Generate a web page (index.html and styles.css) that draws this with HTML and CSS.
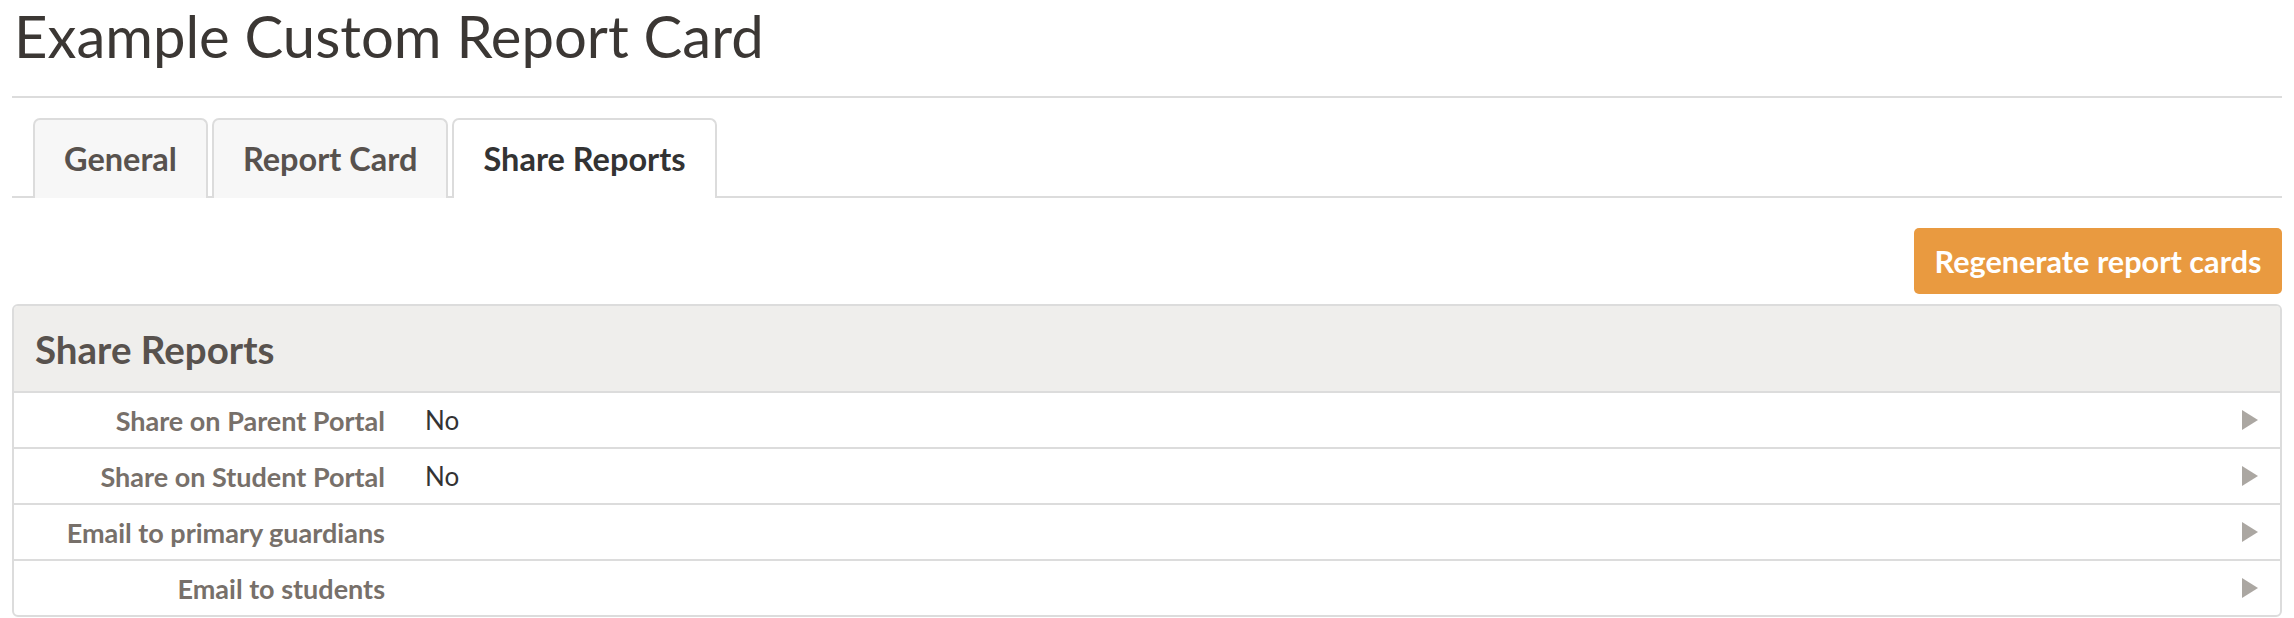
FILE: index.html
```html
<!DOCTYPE html>
<html>
<head>
<meta charset="utf-8">
<link rel="stylesheet" href="styles.css">
</head>
<body>
<div class="page">
  <h1 class="title">Example Custom Report Card</h1>
  <div class="divider"></div>
  <div class="tabs">
    <div class="tab">General</div>
    <div class="tab">Report Card</div>
    <div class="tab active">Share Reports</div>
  </div>
  <div class="actions">
    <button class="btn">Regenerate report cards</button>
  </div>
  <div class="panel">
    <div class="panel-head">Share Reports</div>
    <div class="row"><div class="label">Share on Parent Portal</div><div class="value">No</div><div class="arrow"></div></div>
    <div class="row"><div class="label">Share on Student Portal</div><div class="value">No</div><div class="arrow"></div></div>
    <div class="row"><div class="label">Email to primary guardians</div><div class="value"></div><div class="arrow"></div></div>
    <div class="row"><div class="label">Email to students</div><div class="value"></div><div class="arrow"></div></div>
  </div>
</div>
</body>
</html>
```
FILE: styles.css
```css
html, body { margin: 0; padding: 0; background: #fff; }
body { font-family: Lato, "Open Sans", sans-serif; }
.page { padding: 0 12px; }
.title {
  margin: 0;
  padding-left: 2px;
  height: 96px;
  font-size: 58px;
  font-weight: 400;
  line-height: 72px;
  color: #3b3734;
}
.divider { border-top: 2px solid #dcdcdc; }
.tabs {
  margin-top: 20px;
  display: flex;
  gap: 4px;
  padding-left: 21px;
  border-bottom: 2px solid #dcdcdc;
}
.tab {
  height: 80px;
  box-sizing: border-box;
  padding: 0 29px 2px;
  display: flex;
  align-items: center;
  border: 2px solid #dcdcdc;
  border-bottom: none;
  border-radius: 7px 7px 0 0;
  background: #f7f7f7;
  color: #58524e;
  font-weight: 700;
  font-size: 32.5px;
  margin-bottom: -2px;
}
.tab.active { background: #fff; color: #333; }
.actions {
  display: flex;
  justify-content: flex-end;
  margin-top: 30px;
}
.btn {
  font-family: inherit;
  height: 66px;
  width: 368px;
  border: none;
  border-radius: 5px;
  background: #e99a40;
  color: #fff;
  font-weight: 700;
  font-size: 30.6px;
  padding: 0;
}
.panel {
  margin-top: 10px;
  border: 2px solid #dcdcdc;
  border-radius: 6px;
  overflow: hidden;
}
.panel-head {
  height: 85px;
  background: #efeeec;
  display: flex;
  align-items: center;
  padding-left: 21px;
  font-weight: 700;
  font-size: 38.5px;
  color: #58524e;
}
.row {
  height: 54px;
  border-top: 2px solid #dcdcdc;
  display: flex;
  align-items: center;
}
.label {
  width: 371px;
  flex: none;
  text-align: right;
  font-weight: 700;
  font-size: 27px;
  color: #77706a;
}
.value {
  flex: 1;
  padding-left: 40px;
  font-size: 26px;
  color: #333;
}
.arrow {
  width: 0;
  height: 0;
  border-top: 10px solid transparent;
  border-bottom: 10px solid transparent;
  border-left: 16px solid #aba7a2;
  margin-right: 22px;
}
```
